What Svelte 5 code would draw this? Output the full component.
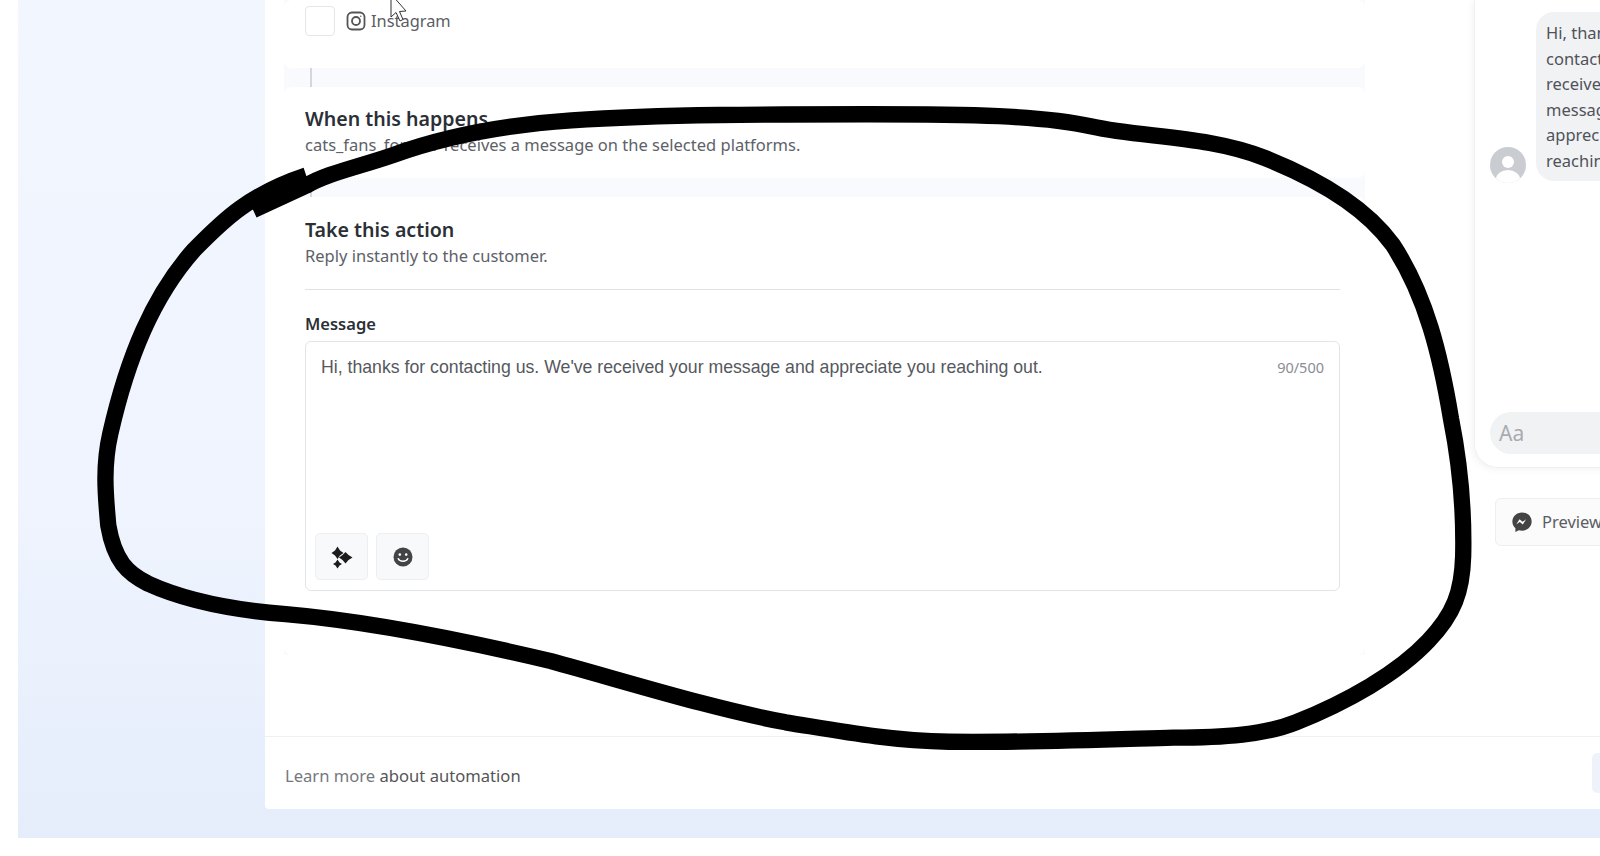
<script>
  const message = "Hi, thanks for contacting us. We've received your message and appreciate you reaching out.";
  const bubbleLines = ['Hi, thanks for', 'contacting us. We\'ve', 'received your', 'message and', 'appreciate you', 'reaching out.'];
</script>

<div class="page">
  <div class="shell">
    <aside class="sidebar"></aside>
    <main class="panel">
      <div class="body">
        <section class="steps">
          <div class="card first">
            <div class="platform">
              <span class="check"></span>
              <svg class="insta" viewBox="0 0 20 20" width="20" height="20" fill="none" stroke="#555" stroke-width="1.8">
                <rect x="1.5" y="1.5" width="17" height="17" rx="4.5" />
                <circle cx="10" cy="10" r="4" />
                <circle cx="14.8" cy="5.2" r="0.7" fill="#555" stroke="none" />
              </svg>
              <span class="name">Instagram</span>
            </div>
          </div>
          <div class="link"><i></i></div>
          <div class="card trigger">
            <h2>When this happens</h2>
            <p>cats_fans_forever receives a message on the selected platforms.</p>
          </div>
          <div class="link"><i></i></div>
          <div class="card action">
            <h2>Take this action</h2>
            <p>Reply instantly to the customer.</p>
            <hr />
            <h3>Message</h3>
            <div class="editor">
              <div class="editor-top">
                <span class="text">{message}</span>
                <span class="count">90/500</span>
              </div>
              <div class="tools">
                <button aria-label="Generate">
                  <svg viewBox="0 0 24 24" width="24" height="24" fill="#1c1c1c">
                    <path d="M7.5 1.5 L10 5.5 L13.5 8 L10 10.5 L7.5 14 L5 10.5 L1.5 8 L5 5.5 Z" />
                    <path d="M15.5 7 L18.5 10 L22.5 12.5 L18.5 15 L15.5 18.5 L12.5 15 L9 12.5 L12.5 10 Z" />
                    <path d="M7.5 14.5 L9.5 17.5 L12 19 L9.5 20.5 L7.5 23.5 L5.5 20.5 L3 19 L5.5 17.5 Z" />
                  </svg>
                </button>
                <button aria-label="Emoji">
                  <svg viewBox="0 0 20 20" width="20" height="20">
                    <circle cx="10" cy="10" r="9.5" fill="#444" />
                    <circle cx="6.8" cy="7.6" r="1.3" fill="#fff" />
                    <circle cx="13.2" cy="7.6" r="1.3" fill="#fff" />
                    <path d="M5.2 11.6 C6.6 15.2 13.4 15.2 14.8 11.6" fill="none" stroke="#fff" stroke-width="1.4" stroke-linecap="round" />
                  </svg>
                </button>
              </div>
            </div>
          </div>
        </section>
        <section class="preview">
          <div class="phone">
            <div class="thread">
              <svg class="avatar" viewBox="0 0 36 36" width="36" height="36">
                <defs>
                  <clipPath id="round"><circle cx="18" cy="18" r="18" /></clipPath>
                </defs>
                <circle cx="18" cy="18" r="18" fill="#c9ccd1" />
                <g clip-path="url(#round)" fill="#fff">
                  <circle cx="18" cy="15" r="6" />
                  <ellipse cx="18" cy="32" rx="12" ry="9" />
                </g>
              </svg>
              <div class="bubble">
                {#each bubbleLines as line}
                  <div>{line}</div>
                {/each}
              </div>
            </div>
            <div class="composer">Aa</div>
          </div>
          <button class="preview-btn">
            <svg viewBox="0 0 24 24" width="22" height="22">
              <path fill="#444" d="M12 1.5C6 1.5 1.5 5.9 1.5 11.5c0 3 1.2 5.5 3.3 7.3V23l3.7-2c1.1.3 2.3.5 3.5.5 6 0 10.5-4.4 10.5-10S18 1.5 12 1.5z" />
              <path fill="#fff" d="M5.8 14.5l3.5-5.4 3.3 2.5 3.900-2.500-3.600 5.500-3.300-2.500z" />
            </svg>
            <span class="name">Preview</span>
          </button>
        </section>
      </div>
      <footer class="foot">
        <span><span class="learn">Learn more</span> about automation</span>
        <span class="next"></span>
      </footer>
    </main>
  </div>

  <!-- hand drawn annotation on top of the screenshot -->
  <svg class="scribble" viewBox="0 0 1568 839" width="1600" height="856" fill="none" stroke="#000" stroke-linejoin="round" stroke-linecap="butt">
    <path stroke-width="16" d="M300 172 C240 192 215 220 190 245 C150 290 125 350 108 425 C100 460 104 490 106 515 C112 550 125 562 145 572 C180 588 230 598 280 602 C350 608 430 622 540 648 C620 670 700 695 770 708 C820 716 870 726 930 727 C1000 728 1080 725 1150 723 C1200 723 1240 720 1270 708 C1320 688 1370 660 1400 628 C1425 602 1433 580 1434 545 C1435 500 1432 460 1422 410 C1412 350 1398 290 1365 240 C1340 205 1295 177 1240 155 C1185 133 1120 135 1070 124 C1020 113 950 112 850 112 C760 112 650 112 560 118 C500 122 440 132 385 152 C350 164 320 170 300 182 L248 206" />
  </svg>

  <svg class="cursor" viewBox="0 0 20 28" width="20" height="28">
    <path d="M1 -6 L1 17 L6 12.5 L10 21 L13 19.5 L9.5 11.5 L16 11 Z" fill="#fff" stroke="#333" stroke-width="1" />
  </svg>
</div>

<style>
  :global(body) {
    margin: 0;
    background: #fff;
  }
  .page {
    position: relative;
    width: 1600px;
    height: 856px;
    overflow: hidden;
    background: #fff;
    font-family: "Noto Sans", "Open Sans", sans-serif;
    color: #444950;
  }
  .shell {
    display: flex;
    height: 838px;
    margin-left: 18px;
    background: linear-gradient(180deg, #f2f6ff 0%, #eff4fe 60%, #e5edfb 100%);
  }
  .sidebar {
    width: 247px;
    flex: none;
  }
  .panel {
    flex: 1;
    height: 809px;
    min-width: 0;
    display: flex;
    flex-direction: column;
    background: #fff;
    border-bottom-left-radius: 4px;
  }
  .body {
    flex: 1;
    display: flex;
    min-height: 0;
    padding-left: 19px;
  }
  .steps {
    width: 1081px;
    flex: none;
    display: flex;
    flex-direction: column;
    background: #f9fafe;
    align-self: flex-start;
  }
  .card {
    background: #fff;
    padding: 0 25px 0 21px;
    border-radius: 8px;
  }
  .first {
    height: 68px;
    padding-top: 6px;
    box-sizing: border-box;
  }
  .platform {
    display: flex;
    align-items: center;
    font-size: 16.4px;
    color: #5a5d63;
  }
  .name {
    padding-bottom: 2px;
  }
  .check {
    width: 28px;
    height: 28px;
    border: 1.5px solid #e4e6ea;
    border-radius: 4px;
    margin-right: 11px;
  }
  .insta {
    margin-right: 5px;
  }
  .link {
    height: 19px;
    padding-left: 26px;
  }
  .link i {
    display: block;
    width: 2px;
    height: 19px;
    background: #d4d7db;
  }
  .trigger {
    height: 91px;
    padding-top: 20px;
    box-sizing: border-box;
  }
  h2 {
    margin: 0;
    font-size: 19.6px;
    line-height: 24px;
    font-weight: 600;
    color: #2b2f36;
  }
  p {
    margin: 2px 0 0;
    font-size: 16.5px;
    line-height: 24px;
    color: #5d6168;
  }
  .action {
    height: 458px;
    padding-top: 21px;
    box-sizing: border-box;
  }
  hr {
    border: none;
    border-top: 1px solid #dfe1e5;
    margin: 21px 0 24px;
  }
  h3 {
    margin: 0 0 7px;
    font-size: 16.5px;
    line-height: 20px;
    font-weight: 600;
    color: #2b2f36;
  }
  .editor {
    height: 250px;
    box-sizing: border-box;
    border: 1.5px solid #e2e4e8;
    border-radius: 6px;
    padding: 14px 15px 10px 15px;
    display: flex;
    flex-direction: column;
    justify-content: space-between;
  }
  .editor-top {
    display: flex;
    justify-content: space-between;
    align-items: center;
  }
  .text {
    font-family: "Liberation Sans", Arial, sans-serif;
    font-size: 17.7px;
    line-height: 22px;
    color: #55585e;
  }
  .count {
    font-size: 14.5px;
    color: #8a8d91;
  }
  .tools {
    display: flex;
    gap: 8px;
    margin-left: -6px;
  }
  .tools button {
    width: 53px;
    height: 47px;
    display: flex;
    align-items: center;
    justify-content: center;
    padding: 0;
    background: #f8f9fa;
    border: 1.5px solid #eceef1;
    border-radius: 5px;
  }
  .preview {
    flex: 1;
    min-width: 0;
    padding-left: 109px;
    overflow: hidden;
  }
  .phone {
    width: 300px;
    height: 468px;
    box-sizing: border-box;
    border-left: 1px solid #eef0f3;
    border-bottom: 1px solid #eef0f3;
    border-bottom-left-radius: 24px;
    box-shadow: -2px 2px 6px rgba(60, 70, 90, 0.06);
    padding: 12px 0 13px 15px;
    display: flex;
    flex-direction: column;
    justify-content: space-between;
  }
  .thread {
    display: flex;
    align-items: flex-end;
    gap: 10px;
  }
  .avatar {
    flex: none;
    margin-bottom: -2px;
  }
  .bubble {
    width: 170px;
    flex: none;
    background: #f1f2f4;
    border-radius: 18px;
    padding: 8px 12px 8px 10px;
    font-size: 16.5px;
    line-height: 25.5px;
    white-space: nowrap;
    color: #4f5359;
  }
  .composer {
    width: 180px;
    height: 42px;
    box-sizing: border-box;
    background: #f1f2f4;
    border-radius: 21px;
    padding-left: 9px;
    font-size: 21px;
    line-height: 43px;
    color: #a8abb0;
  }
  .preview-btn {
    margin: 30px 0 0 21px;
    width: 200px;
    height: 48px;
    display: flex;
    align-items: center;
    gap: 9px;
    padding: 0 0 0 15px;
    background: #fbfbfc;
    border: 1.5px solid #eceef1;
    border-radius: 6px;
    font: inherit;
    font-size: 16.5px;
    color: #5a5d63;
  }
  .foot {
    height: 73px;
    flex: none;
    box-sizing: border-box;
    border-top: 1.5px solid #eef0f3;
    padding: 5px 0 0 20px;
    display: flex;
    align-items: center;
    justify-content: space-between;
    font-size: 16.6px;
    color: #555;
  }
  .learn {
    color: #74787d;
  }
  .next {
    width: 8px;
    height: 40px;
    margin-top: -5px;
    border-radius: 5px 0 0 5px;
    background: #eef3fb;
  }
  .scribble {
    position: absolute;
    left: 0;
    top: 0;
  }
  .cursor {
    position: absolute;
    left: 390px;
    top: 0;
  }
</style>
